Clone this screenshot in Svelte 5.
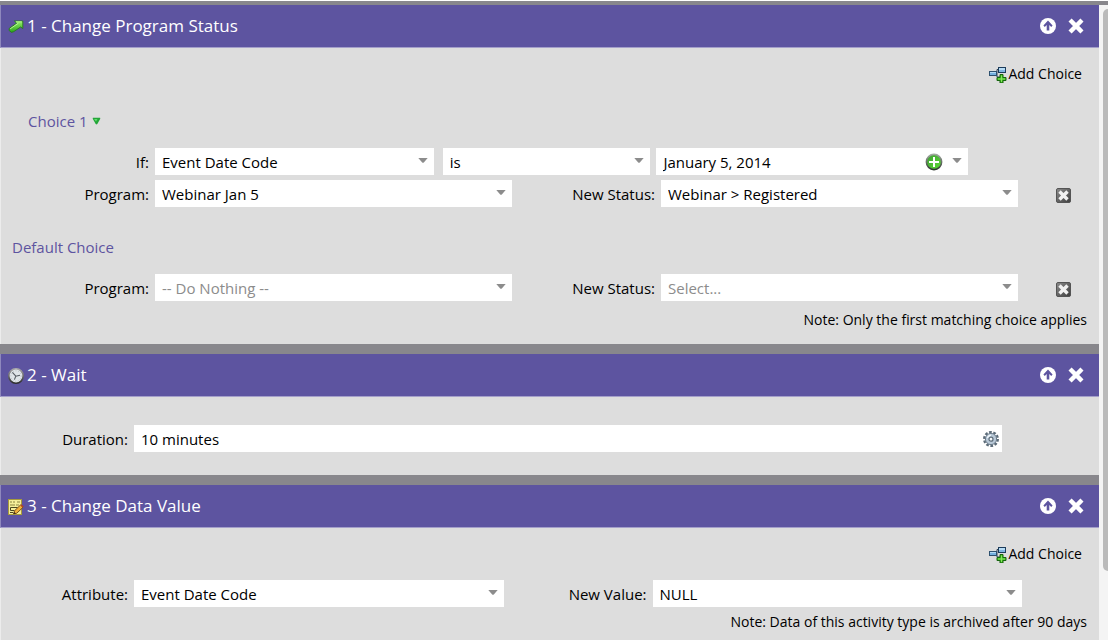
<script>
  let attribute = 'Event Date Code';
  let operator = 'is';
  let date = 'January 5, 2014';
  let duration = '10 minutes';

  const choiceRows = {
    first: { id: 'c1', program: 'Webinar Jan 5', status: 'Webinar > Registered', empty: false },
    fallback: { id: 'cd', program: '-- Do Nothing --', status: 'Select...', empty: true },
  };
</script>

{#snippet arrow()}
  <svg class="arrow" width="10" height="5" viewBox="0 0 10 5" aria-hidden="true">
    <path d="M0.3 0h9.4L5.8 4.4Q5 5.2 4.2 4.4Z" fill="#8c8c8c" />
  </svg>
{/snippet}

{#snippet dropdown(id, value, label, muted)}
  <div class="field">
    <select {id} class:muted aria-label={label}>
      <option>{value}</option>
    </select>
    {@render arrow()}
  </div>
{/snippet}

{#snippet headerActions()}
  <div class="header-actions">
    <button type="button" aria-label="Move up">
      <svg width="16" height="16" viewBox="0 0 16 16">
        <circle cx="8" cy="8" r="8" fill="#fff" />
        <path d="M8 2.6 12.6 7.4 11.2 8.9 9.3 7.1V12.6H6.7V7.1L4.8 8.9 3.4 7.4Z" fill="#5d54a0" />
      </svg>
    </button>
    <button type="button" aria-label="Remove step">
      <svg width="16" height="16" viewBox="0 0 16 16">
        <path d="M3.6 3.6 12.4 12.4M12.4 3.6 3.6 12.4" stroke="#fff" stroke-width="4.4" stroke-linecap="square" fill="none" />
      </svg>
    </button>
  </div>
{/snippet}

{#snippet addChoice()}
  <button type="button" class="add-choice">
    <svg width="18" height="17" viewBox="0 0 18 17" aria-hidden="true">
      <path d="M8 6.5V3.5H10M8 6.5V11H11" stroke="#2d4257" fill="none" />
      <rect x="9.5" y="1.5" width="7" height="5" fill="#7fb6e2" stroke="#1d3c5b" />
      <rect x="10" y="2" width="6" height="2" fill="#b5dbf5" />
      <rect x="0.5" y="5.5" width="7" height="4" fill="#76b1e0" stroke="#2d506f" />
      <rect x="1" y="6" width="6" height="1" fill="#b5dbf5" />
      <path d="M11 8.5h3v3h3v3h-3v2.5h-3v-2.5H8v-3h3Z" fill="#3fb81f" stroke="#17660f" />
      <path d="M12.5 9.5v6.5M9 13h7" stroke="#86e85e" />
    </svg>
    <span>Add Choice</span>
  </button>
{/snippet}

{#snippet programRow(row)}
  <div class="row program-row">
    <label for="{row.id}-program">Program:</label>
    {@render dropdown(`${row.id}-program`, row.program, null, row.empty)}
    <label for="{row.id}-status">New Status:</label>
    {@render dropdown(`${row.id}-status`, row.status, null, row.empty)}
    <button type="button" class="delete" aria-label="Remove choice">
      <svg width="15" height="15" viewBox="0 0 15 15">
        <defs>
          <linearGradient id="{row.id}-box" x1="0" y1="0" x2="1" y2="1">
            <stop offset="0" stop-color="#8b8b8b" />
            <stop offset="1" stop-color="#3e3e3e" />
          </linearGradient>
        </defs>
        <rect x="0.5" y="0.5" width="14" height="14" rx="1.5" fill="url(#{row.id}-box)" stroke="#545454" />
        <path d="M4.7 4.7 10.3 10.3M10.3 4.7 4.7 10.3" stroke="#f1f1f1" stroke-width="3.4" stroke-linecap="square" />
      </svg>
    </button>
  </div>
{/snippet}

<div class="flow">
  <main class="steps">
    <section>
      <header>
        <svg width="16" height="16" viewBox="0 0 16 16" aria-hidden="true">
          <defs>
            <linearGradient id="go" x1="0" y1="0" x2="0" y2="1">
              <stop offset="0" stop-color="#9af26b" />
              <stop offset="1" stop-color="#27a318" />
            </linearGradient>
          </defs>
          <path d="M6.4 3H14.8V10.6L12.6 9 5.8 13.6 3.6 14.4 1.2 12.6V10.4L8.6 5.2Z" fill="url(#go)" stroke="#267a1d" stroke-linejoin="round" stroke-width="0.9" />
          <path d="M2.2 10.8 10.4 5.2M8 3.8H13.8" stroke="#c8ffa6" stroke-width="0.8" />
        </svg>
        <h2>1 - Change Program Status</h2>
        {@render headerActions()}
      </header>
      <div class="body">
        {@render addChoice()}

        <button type="button" class="choice-title">
          Choice 1
          <svg width="9" height="8" viewBox="0 0 9 8" aria-hidden="true">
            <path d="M1 0.8H8Q8.6 1 8.1 2L5.3 7Q4.5 7.9 3.7 7L0.9 2Q0.4 1 1 0.8Z" fill="#23a638" />
            <path d="M2 1.9H5.5L4 4.6Z" fill="#5fe06c" />
          </svg>
        </button>

        <div class="row if-row">
          <label for="if-attribute">If:</label>
          {@render dropdown('if-attribute', attribute, null, false)}
          <div class="operator">
            {@render dropdown('if-operator', operator, 'Operator', false)}
          </div>
          <div class="field">
            <input type="text" bind:value={date} aria-label="Date value" />
            <button type="button" class="add-value" aria-label="Add value">
              <svg width="18" height="18" viewBox="0 0 18 18">
                <defs>
                  <linearGradient id="plus-ring" x1="0" y1="0" x2="0" y2="1">
                    <stop offset="0" stop-color="#a0a8a0" />
                    <stop offset="1" stop-color="#303830" />
                  </linearGradient>
                  <linearGradient id="plus-fill" x1="0" y1="0" x2="1" y2="1">
                    <stop offset="0" stop-color="#3c9e31" />
                    <stop offset="1" stop-color="#5fdd38" />
                  </linearGradient>
                </defs>
                <circle cx="9" cy="9" r="7.6" fill="url(#plus-fill)" stroke="url(#plus-ring)" stroke-width="1.6" />
                <path d="M9 4v10M4 9h10" stroke="#fff" stroke-width="2" />
              </svg>
            </button>
            {@render arrow()}
          </div>
        </div>
        {@render programRow(choiceRows.first)}

        <h3>Default Choice</h3>
        {@render programRow(choiceRows.fallback)}
        <p class="note">Note: Only the first matching choice applies</p>
      </div>
    </section>

    <section>
      <header>
        <svg width="18" height="18" viewBox="0 0 18 18" aria-hidden="true">
          <defs>
            <linearGradient id="rim" x1="0" y1="0" x2="0" y2="1">
              <stop offset="0" stop-color="#a9a9a9" />
              <stop offset="1" stop-color="#2c2c2c" />
            </linearGradient>
          </defs>
          <circle cx="9" cy="10" r="7.2" fill="#dfe4e8" stroke="url(#rim)" stroke-width="1.6" />
          <circle cx="9" cy="10" r="5.2" fill="none" stroke="#b9bfc4" stroke-dasharray="1 1.6" />
          <path d="M5.4 6.4 8.8 10.2 7.4 13.6M8.8 10.2 13 9.2" stroke="#555c62" stroke-width="1.1" fill="none" />
        </svg>
        <h2>2 - Wait</h2>
        {@render headerActions()}
      </header>
      <div class="body wait-body">
        <div class="row wait-row">
          <label for="duration">Duration:</label>
          <div class="field">
            <input id="duration" type="text" bind:value={duration} />
            <button type="button" class="settings" aria-label="Duration settings">
              <svg width="18" height="18" viewBox="0 0 18 18">
                <circle cx="9" cy="9" r="6.8" fill="none" stroke="#5c6b78" stroke-width="2.4" stroke-dasharray="2.7 1.57" />
                <circle cx="9" cy="9" r="5.6" fill="#b9c9d8" stroke="#6b7c8b" />
                <path d="M5.4 8.2A3.8 3.8 0 0 1 9 5.2" stroke="#eef5fa" stroke-width="1.4" fill="none" />
                <circle cx="9" cy="9.2" r="2" fill="#f4f8fb" stroke="#5c6b78" stroke-width="1.2" />
              </svg>
            </button>
          </div>
        </div>
      </div>
    </section>

    <section>
      <header>
        <svg width="16" height="18" viewBox="0 0 16 18" aria-hidden="true">
          <rect x="0.5" y="2.5" width="13" height="15" fill="#f5ee9a" stroke="#a69b3d" />
          <path d="M2 5h2M5 5h2M9 5h3M2 8h5M8 8h3" stroke="#8b8440" />
          <path d="M2.5 10.5h7M2.5 13.5h4M2.5 10.5v3M2 15.5h3" stroke="#4b471f" fill="none" />
          <path d="M5.6 16.8 6.5 13.8 12.5 8 15 10.3 8.8 16.2Z" fill="#f0b03a" stroke="#6a4312" stroke-width="0.9" />
          <path d="M12.4 8.2 13.4 7.2 15.8 9.4 14.8 10.4Z" fill="#b0432b" />
          <path d="M5.4 17.1 6.1 15 7.7 16.4Z" fill="#2b2116" />
        </svg>
        <h2>3 - Change Data Value</h2>
        {@render headerActions()}
      </header>
      <div class="body value-body">
        {@render addChoice()}
        <div class="row value-row">
          <label for="attribute">Attribute:</label>
          {@render dropdown('attribute', attribute, null, false)}
          <label for="new-value">New Value:</label>
          {@render dropdown('new-value', 'NULL', null, false)}
        </div>
        <p class="note">Note: Data of this activity type is archived after 90 days</p>
      </div>
    </section>
  </main>

  <div class="scrollbar" aria-hidden="true">
    <div class="thumb"></div>
  </div>
</div>

<style>
  :global(body) {
    margin: 0;
    background: #fff;
  }

  .flow {
    display: flex;
    padding: 1px 0;
    font-family: 'Open Sans', 'Noto Sans', sans-serif;
    font-size: 15px;
    line-height: 20px;
    color: #000;
  }

  .steps {
    flex: 1;
    min-width: 0;
  }

  section {
    border-top: 10px solid #88878c;
  }

  section:first-child {
    border-top-width: 4px;
  }

  header {
    display: flex;
    align-items: center;
    height: 42px;
    padding: 0 15px 0 6px;
    background: #5d54a0;
    border-left: 1px solid #8e88bd;
    border-bottom: 1px solid #a49fca;
  }

  header > svg {
    flex: none;
    width: 18px;
  }

  h2,
  h3,
  p {
    margin: 0;
    font-weight: 400;
  }

  h2 {
    flex: 1;
    margin-left: 2px;
    font-size: 17px;
    color: #fff;
  }

  button {
    display: flex;
    padding: 0;
    border: 0;
    background: none;
    font: inherit;
    color: inherit;
    cursor: pointer;
  }

  .header-actions {
    display: flex;
    gap: 12px;
  }

  .body {
    padding: 16px 0 14px;
    background: #dddddd;
    border-left: 1px solid #ececec;
  }

  .wait-body {
    padding: 28px 0 23px;
  }

  .value-body {
    padding-bottom: 8px;
  }

  .add-choice {
    align-items: center;
    gap: 1px;
    margin: 0 17px 0 auto;
    font-size: 14px;
  }

  .choice-title {
    align-items: center;
    gap: 4px;
    margin: 27px 0 17px 27px;
    color: #5d54a0;
  }

  h3 {
    margin: 30px 0 17px 11px;
    font-size: 15px;
    color: #5d54a0;
  }

  .row {
    display: grid;
    align-items: center;
    column-gap: 6px;
  }

  .row label {
    text-align: right;
    white-space: nowrap;
  }

  .if-row {
    grid-template-columns: 148px 279fr 211fr 312fr;
    margin-bottom: 5px;
    padding-right: 131px;
  }

  .operator {
    padding-left: 3px;
  }

  .program-row {
    grid-template-columns: 148px 1fr 137px 1fr 75px;
  }

  .wait-row {
    grid-template-columns: 127px 1fr;
    padding-right: 97px;
  }

  .value-row {
    grid-template-columns: 127px 1fr 137px 1fr;
    margin-top: 16px;
    padding-right: 77px;
  }

  .field {
    position: relative;
    min-width: 0;
  }

  select,
  input {
    display: block;
    box-sizing: border-box;
    width: 100%;
    height: 27px;
    padding: 0 28px 0 7px;
    border: 0;
    border-radius: 0;
    background: #fff;
    font: inherit;
    color: #000;
    appearance: none;
  }

  .muted {
    color: #8c8c8c;
  }

  .arrow {
    position: absolute;
    top: 10px;
    right: 6px;
    pointer-events: none;
  }

  .add-value {
    position: absolute;
    top: 5px;
    right: 25px;
  }

  .settings {
    position: absolute;
    top: 5px;
    right: 2px;
  }

  .delete {
    margin: 3px 0 0 32px;
  }

  .note {
    margin: 9px 12px 0 0;
    font-size: 14px;
    text-align: right;
  }

  .value-body .note {
    margin-top: 5px;
  }

  .scrollbar {
    display: flex;
    justify-content: flex-end;
    width: 9px;
    padding-top: 4px;
    box-sizing: border-box;
    border-top: 4px solid #88878c;
    background: #f4f4f4;
  }

  .thumb {
    width: 5px;
    height: 89%;
    border-radius: 5px 0 0 5px;
    background: #bababa;
  }
</style>
